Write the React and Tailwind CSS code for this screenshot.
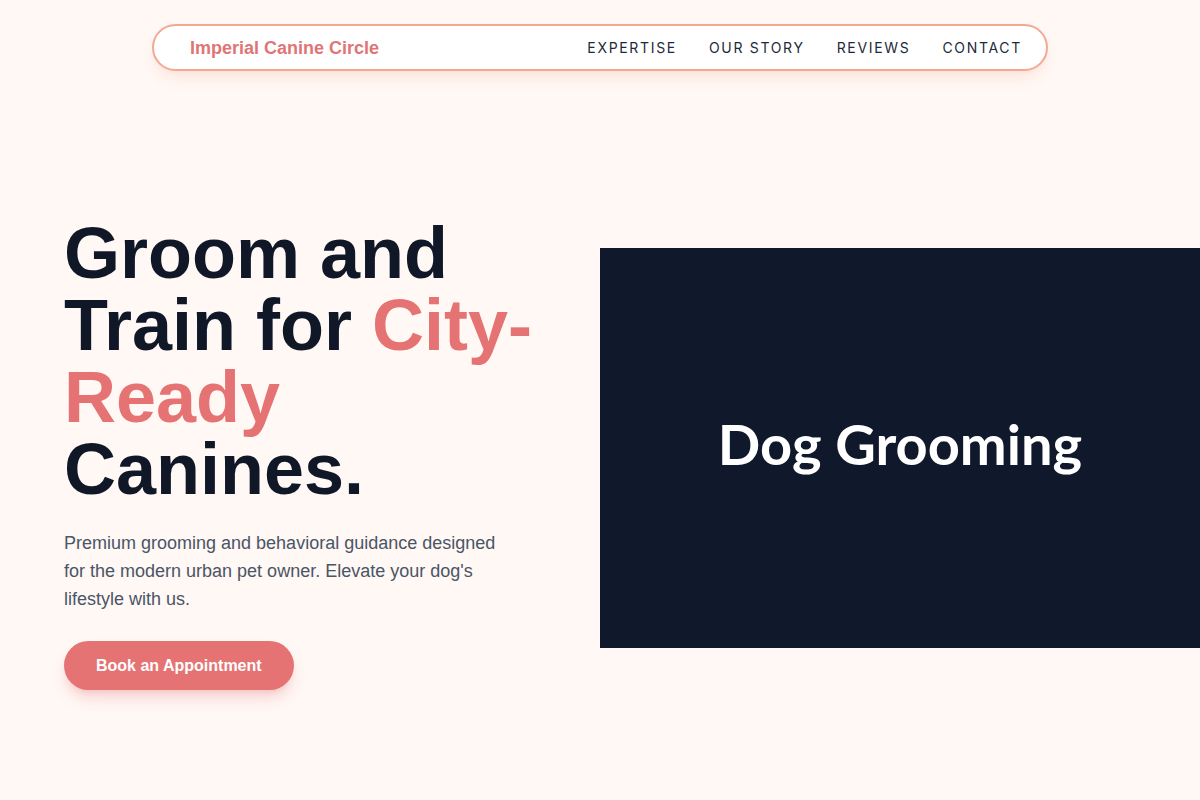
const navLinks = ["Expertise", "Our Story", "Reviews", "Contact"];

const Header = () => (
  <header className="px-4 pt-6">
    <nav className="mx-auto flex h-[47px] max-w-4xl items-center justify-between rounded-full border-2 border-[#f4a892] bg-white pl-9 pr-6 shadow-lg shadow-[#f4a892]/20">
      <a href="#" className="font-['Liberation_Sans',Arial,sans-serif] text-lg font-bold text-[#e07575]">
        Imperial Canine Circle
      </a>
      <ul className="flex items-center gap-8 font-['Inter',sans-serif] text-sm uppercase tracking-[0.12em] text-gray-800">
        {navLinks.map((link) => (
          <li key={link}>
            <a href="#" className="hover:text-[#e57373]">
              {link}
            </a>
          </li>
        ))}
      </ul>
    </nav>
  </header>
);

const Hero = () => (
  <section className="grid flex-1 grid-cols-2 items-center pt-6">
    <div className="pl-16 pr-12 pt-3 font-['Liberation_Sans',Arial,sans-serif]">
      <h1 className="mb-6 text-7xl font-bold leading-none text-gray-900">
        Groom and Train for <span className="text-[#e57373]">City-Ready</span> Canines.
      </h1>
      <p className="mb-7 max-w-md text-lg leading-7 text-gray-600">
        Premium grooming and behavioral guidance designed for the modern urban pet owner. Elevate
        your dog's lifestyle with us.
      </p>
      <button className="h-[49px] rounded-full bg-[#e57373] px-8 text-base font-bold text-white shadow-lg shadow-[#e57373]/30 hover:bg-[#d96262]">
        Book an Appointment
      </button>
    </div>
    <div className="flex h-[400px] items-center justify-center bg-[#10182b]">
      <h2 className="mb-2 font-['Lato',sans-serif] text-[56px] font-bold text-white">Dog Grooming</h2>
    </div>
  </section>
);

export default function App() {
  return (
    <div className="flex h-screen flex-col bg-[#fff8f5]">
      <Header />
      <Hero />
    </div>
  );
}
